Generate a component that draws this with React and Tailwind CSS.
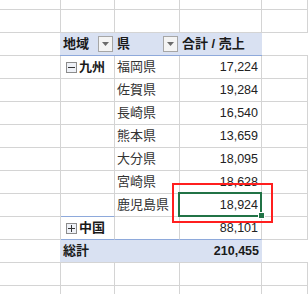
import React from "react";

const font = { fontFamily: '"Liberation Sans", "Noto Sans CJK JP", sans-serif' };

// column widths include the 1px right gridline
const A = "w-[61px]";
const B = "w-[54px]";
const C = "w-[65px]";
const D = "w-[82px]";

function Cell({ w, className = "", children }) {
  return (
    <div
      className={`${w} shrink-0 h-full border-r border-b border-[#d4d4d4] flex items-center ${className}`}
    >
      {children}
    </div>
  );
}

function Row({ h = "h-[23px]", children }) {
  return <div className={`flex ${h}`}>{children}</div>;
}

function EmptyRow({ h }) {
  return (
    <Row h={h}>
      <Cell w={A} />
      <Cell w={B} />
      <Cell w={C} />
      <Cell w={D} />
      <Cell w="flex-1" />
    </Row>
  );
}

function FilterButton() {
  return (
    <div className="w-[15px] h-[16px] border border-[#a6a6a6] bg-[#f4f4f4] flex items-center justify-center">
      <svg width="7" height="4" viewBox="0 0 7 4">
        <polygon points="0,0 7,0 3.5,4" fill="#6b6b6b" />
      </svg>
    </div>
  );
}

function ToggleBox({ plus }) {
  return (
    <div className="w-[11px] h-[11px] border border-[#8c8c8c] bg-[#eef1f7] flex items-center justify-center shrink-0">
      <svg width="7" height="7" viewBox="0 0 7 7">
        <rect x="0" y="3" width="7" height="1" fill="#333" />
        {plus && <rect x="3" y="0" width="1" height="7" fill="#333" />}
      </svg>
    </div>
  );
}

const rows = [
  { label: "九州", toggle: "minus", pref: "福岡県", value: "17,224" },
  { pref: "佐賀県", value: "19,284" },
  { pref: "長崎県", value: "16,540" },
  { pref: "熊本県", value: "13,659" },
  { pref: "大分県", value: "18,095" },
  { pref: "宮崎県", value: "18,628" },
  { pref: "鹿児島県", value: "18,924", lastInGroup: true },
  { label: "中国", toggle: "plus", pref: "", value: "88,101", beforeTotal: true },
];

export default function App() {
  return (
    <div
      className="relative w-[308px] h-[294px] overflow-hidden bg-white text-[13px] text-[#1a1a1a]"
      style={font}
    >
      <EmptyRow h="h-[10px]" />
      <EmptyRow h="h-[23px]" />

      {/* header */}
      <Row>
        <div className="w-[60px] shrink-0 h-full border-b border-[#d4d4d4]" />
        <div className="w-[202px] shrink-0 h-full flex bg-[#d9e1f2] border-b border-[#8ea9db] font-bold">
          <div className="w-[55px] flex items-center justify-between pl-[3px] pr-[2px]">
            <span>地域</span>
            <FilterButton />
          </div>
          <div className="w-[65px] flex items-center justify-between pl-[2px] pr-[2px]">
            <span>県</span>
            <FilterButton />
          </div>
          <div className="w-[82px] flex items-center pl-[2px]">
            <span>合計 / 売上</span>
          </div>
        </div>
        <div className="flex-1 h-full border-b border-[#d4d4d4]" />
      </Row>

      {rows.map((r, i) => {
        const blueB = r.lastInGroup ? "border-b-[#8ea9db]" : "";
        const blueAll = r.beforeTotal ? "border-b-[#8ea9db]" : "";
        return (
          <Row key={i}>
            <Cell w={A} />
            <Cell w={B} className={`pl-[5px] gap-[2px] font-bold ${blueB} ${blueAll}`}>
              {r.toggle && <ToggleBox plus={r.toggle === "plus"} />}
              {r.label && <span>{r.label}</span>}
            </Cell>
            <Cell w={C} className={`pl-[2px] text-[#333] ${blueAll}`}>
              {r.pref}
            </Cell>
            <Cell w={D} className={`justify-end pr-[3px] text-[12.5px] text-[#222] ${blueAll}`}>
              {r.value}
            </Cell>
            <Cell w="flex-1" />
          </Row>
        );
      })}

      {/* grand total */}
      <Row>
        <div className="w-[60px] shrink-0 h-full border-b border-[#d4d4d4]" />
        <div className="w-[202px] shrink-0 h-full flex items-center justify-between bg-[#d9e1f2] border-b border-[#d4d4d4] font-bold pl-[3px] pr-[3px]">
          <span>総計</span>
          <span className="text-[12.5px]">210,455</span>
        </div>
        <div className="flex-1 h-full border-b border-[#d4d4d4]" />
      </Row>

      <EmptyRow h="h-[23px]" />
      <EmptyRow h="h-[23px]" />

      {/* active cell */}
      <div className="absolute left-[178px] top-[192px] w-[84px] h-[25px] border-2 border-[#217346]" />
      <div className="absolute left-[258px] top-[212px] w-[7px] h-[7px] bg-[#217346] border border-white" />

      {/* red highlight */}
      <div className="absolute left-[172px] top-[183px] w-[101px] h-[40px] border-2 border-[#ff1f1f]" />
    </div>
  );
}
